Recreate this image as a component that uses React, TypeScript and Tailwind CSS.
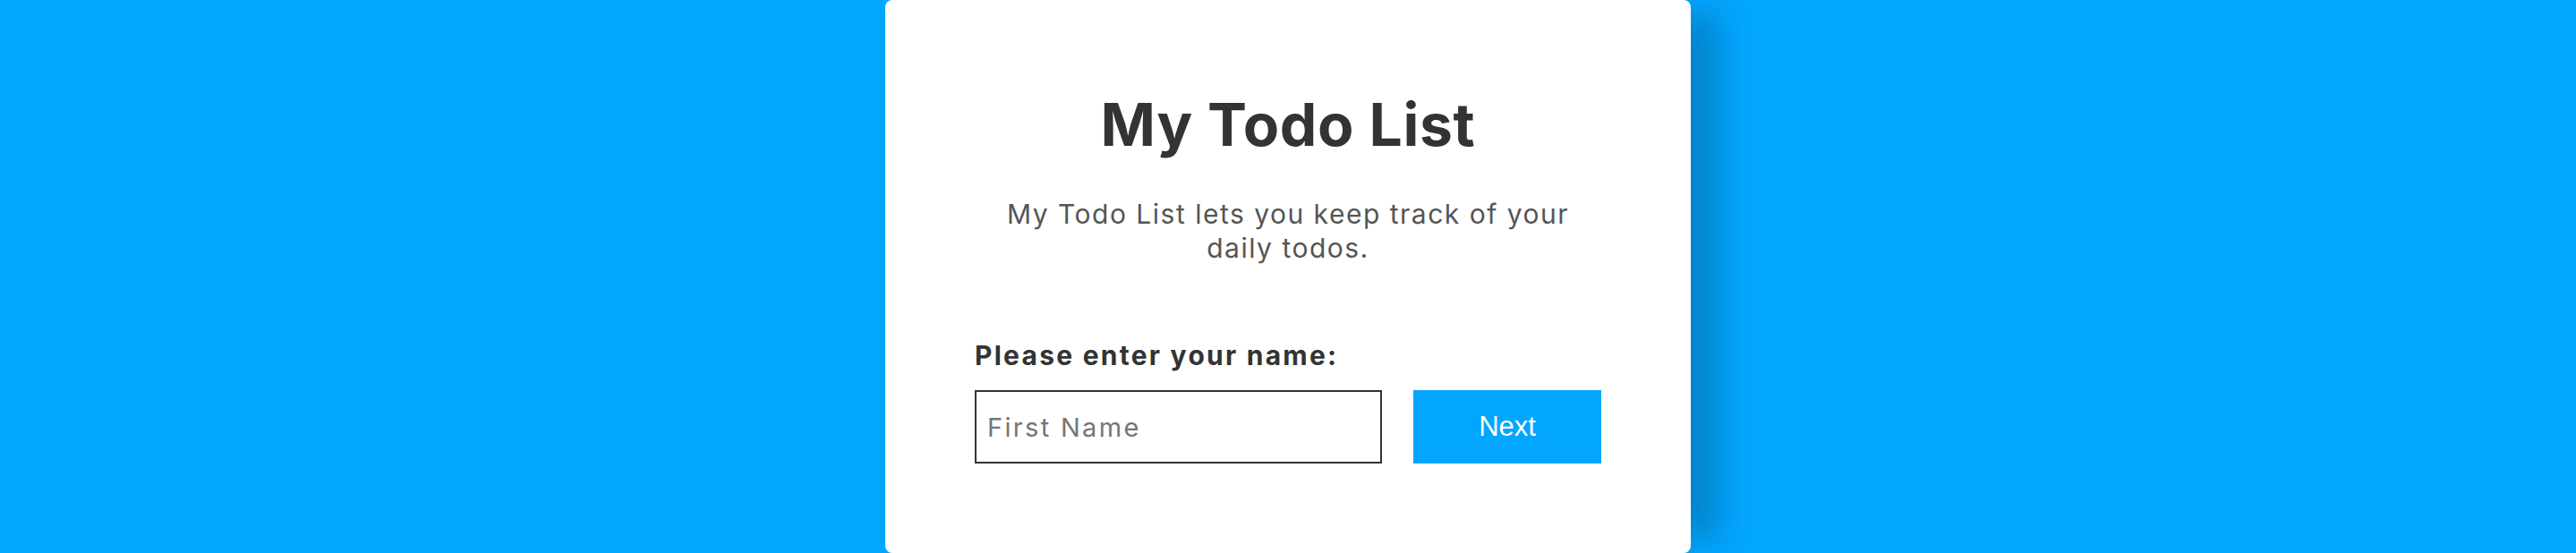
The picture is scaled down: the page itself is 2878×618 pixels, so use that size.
import { useState } from 'react';

export default function App() {
  const [name, setName] = useState('');

  return (
    <div className="min-h-screen flex justify-center bg-[#03a6ff] font-['Inter','Liberation_Sans',sans-serif]">
      <div className="w-[900px] bg-white rounded-lg px-[100px] pt-[100px] pb-[100px] shadow-[47px_0_34px_-15px_rgba(0,0,0,0.2)]">
        <h1 className="text-center text-[66px] leading-[1.2] font-bold tracking-[0.01em] text-[#333333]">My Todo List</h1>
        <p className="mx-auto mt-[41px] max-w-[660px] text-center text-[30px] leading-[38px] tracking-[0.05em] text-[#555555]">
          My Todo List lets you keep track of your daily todos.
        </p>
        <label
          htmlFor="first-name"
          className="block mt-[84px] text-[30px] leading-[34px] font-bold tracking-[0.075em] text-[#333333]"
        >
          Please enter your name:
        </label>
        <div className="mt-[22px] flex justify-between">
          <input
            id="first-name"
            value={name}
            onChange={(e) => setName(e.target.value)}
            placeholder="First Name"
            className="w-[455px] h-[82px] border-2 border-[#333333] px-3 text-[29px] tracking-[0.08em] text-[#333333] placeholder:text-[#757575] outline-none"
          />
          <button className="w-[210px] h-[82px] bg-[#03a6ff] text-white text-[31px] font-['Liberation_Sans',Arial,sans-serif]">
            Next
          </button>
        </div>
      </div>
    </div>
  );
}
